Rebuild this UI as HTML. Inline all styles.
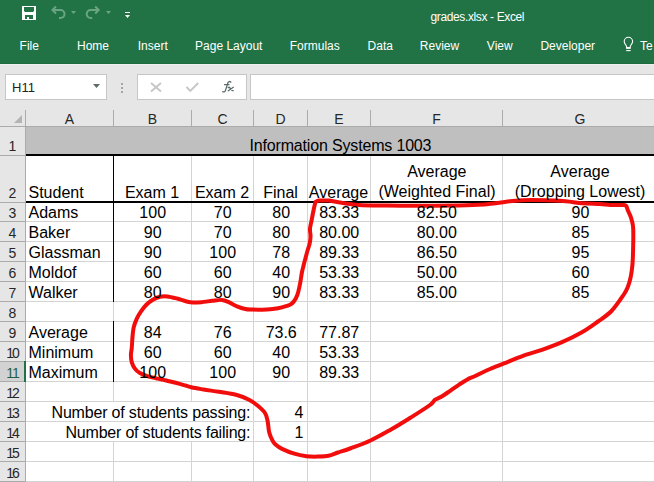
<!DOCTYPE html>
<html><head><meta charset="utf-8"><style>
html,body{margin:0;padding:0;width:654px;height:482px;overflow:hidden;background:#fff}
svg{display:block}
text{font-family:"Liberation Sans",sans-serif}
</style></head><body>
<svg width="654" height="482" viewBox="0 0 654 482">
<g shape-rendering="crispEdges">
</g>
<defs><filter id="soft" x="-5%" y="-5%" width="110%" height="110%"><feGaussianBlur stdDeviation="0.45"/></filter></defs>
<rect x="0" y="0" width="654" height="64" fill="#217346" />
<rect x="0" y="63" width="654" height="1" fill="#1d6a3f" />
<rect x="0" y="64" width="654" height="46" fill="#e6e6e6" />
<rect x="0" y="64" width="654" height="1" fill="#f0eef0" />
<rect x="5" y="74" width="102" height="26" fill="#c6c6c6" />
<rect x="6" y="75" width="100" height="24" fill="#fff" />
<rect x="137" y="74" width="110" height="26" fill="#c6c6c6" />
<rect x="138" y="75" width="108" height="24" fill="#fff" />
<rect x="250" y="74" width="451" height="26" fill="#c6c6c6" />
<rect x="251" y="75" width="449" height="24" fill="#fff" />
<rect x="121" y="83" width="2" height="2" fill="#a6a6a6" />
<rect x="121" y="87" width="2" height="2" fill="#a6a6a6" />
<rect x="121" y="91" width="2" height="2" fill="#a6a6a6" />
<rect x="0" y="110" width="654" height="16" fill="#e6e6e6" />
<rect x="0" y="126" width="654" height="1" fill="#ababab" />
<rect x="0" y="127" width="25" height="355" fill="#e6e6e6" />
<rect x="25" y="110" width="1" height="372" fill="#ababab" />
<rect x="113" y="110" width="1" height="16" fill="#ababab" />
<rect x="191" y="110" width="1" height="16" fill="#ababab" />
<rect x="253" y="110" width="1" height="16" fill="#ababab" />
<rect x="307" y="110" width="1" height="16" fill="#ababab" />
<rect x="370" y="110" width="1" height="16" fill="#ababab" />
<rect x="502" y="110" width="1" height="16" fill="#ababab" />
<path d="M14 123 L22 123 L22 115 Z" fill="#b4b4b4"/>
<rect x="26" y="127" width="628" height="355" fill="#fff" />
<rect x="26" y="155" width="628" height="1" fill="#d4d4d4" />
<rect x="0" y="155" width="25" height="1" fill="#ababab" />
<rect x="26" y="202" width="628" height="1" fill="#d4d4d4" />
<rect x="0" y="202" width="25" height="1" fill="#ababab" />
<rect x="26" y="221" width="628" height="1" fill="#d4d4d4" />
<rect x="0" y="221" width="25" height="1" fill="#ababab" />
<rect x="26" y="241" width="628" height="1" fill="#d4d4d4" />
<rect x="0" y="241" width="25" height="1" fill="#ababab" />
<rect x="26" y="261" width="628" height="1" fill="#d4d4d4" />
<rect x="0" y="261" width="25" height="1" fill="#ababab" />
<rect x="26" y="281" width="628" height="1" fill="#d4d4d4" />
<rect x="0" y="281" width="25" height="1" fill="#ababab" />
<rect x="26" y="301" width="628" height="1" fill="#d4d4d4" />
<rect x="0" y="301" width="25" height="1" fill="#ababab" />
<rect x="26" y="321" width="628" height="1" fill="#d4d4d4" />
<rect x="0" y="321" width="25" height="1" fill="#ababab" />
<rect x="26" y="341" width="628" height="1" fill="#d4d4d4" />
<rect x="0" y="341" width="25" height="1" fill="#ababab" />
<rect x="26" y="361" width="628" height="1" fill="#d4d4d4" />
<rect x="0" y="361" width="25" height="1" fill="#ababab" />
<rect x="26" y="381" width="628" height="1" fill="#d4d4d4" />
<rect x="0" y="381" width="25" height="1" fill="#ababab" />
<rect x="26" y="401" width="628" height="1" fill="#d4d4d4" />
<rect x="0" y="401" width="25" height="1" fill="#ababab" />
<rect x="26" y="421" width="628" height="1" fill="#d4d4d4" />
<rect x="0" y="421" width="25" height="1" fill="#ababab" />
<rect x="26" y="441" width="628" height="1" fill="#d4d4d4" />
<rect x="0" y="441" width="25" height="1" fill="#ababab" />
<rect x="26" y="461" width="628" height="1" fill="#d4d4d4" />
<rect x="0" y="461" width="25" height="1" fill="#ababab" />
<rect x="26" y="481" width="628" height="1" fill="#d4d4d4" />
<rect x="0" y="481" width="25" height="1" fill="#ababab" />
<rect x="113" y="156" width="1" height="245" fill="#d4d4d4" />
<rect x="113" y="441" width="1" height="41" fill="#d4d4d4" />
<rect x="191" y="156" width="1" height="245" fill="#d4d4d4" />
<rect x="191" y="441" width="1" height="41" fill="#d4d4d4" />
<rect x="253" y="156" width="1" height="326" fill="#d4d4d4" />
<rect x="307" y="156" width="1" height="326" fill="#d4d4d4" />
<rect x="370" y="156" width="1" height="326" fill="#d4d4d4" />
<rect x="502" y="156" width="1" height="326" fill="#d4d4d4" />
<rect x="26" y="127" width="628" height="27" fill="#bfbfbf" />
<rect x="26" y="154" width="628" height="2" fill="#000" />
<rect x="26" y="201" width="628" height="2" fill="#000" />
<rect x="113" y="156" width="1" height="146" fill="#000" />
<rect x="113" y="321" width="1" height="61" fill="#000" />
<rect x="0" y="362" width="24" height="19" fill="#d2d2d2" />
<rect x="24" y="361" width="2" height="21" fill="#217346" />
<g fill="#fff">
<path d="M22 6h14v14H22z M24 7h10v4l-1 1h-8l-1-1z M25 15h8v4h-4v-2h-2v2h-2z" fill-rule="evenodd"/>
</g>
<g fill="none" stroke="#6aa583" stroke-width="2"><path d="M52.5 10 h8 a4 4 0 0 1 0 8 h-1.5"/><path d="M56 6.5 l-3.5 3.5 l3.5 3.5"/><path d="M98.7 10 h-8 a4 4 0 0 0 0 8 h1.5"/><path d="M95.2 6.5 l3.5 3.5 l-3.5 3.5"/></g>
<path d="M71 11h5l-2.5 3z M106 11h5l-2.5 3z" fill="#6aa583"/>
<path d="M125 12h5v1h-5z M125 15h5l-2.5 3z" fill="#fff"/>
<g fill="none" stroke="#fff" stroke-width="1.1"><path d="M626.6 48.3 V46.8 C626.6 45.2 624.2 44 624.2 41.5 A4.2 4.2 0 0 1 632.6 41.5 C632.6 44 630.2 45.2 630.2 46.8 V48.3 Z"/><path d="M626.2 50.6 H630.6"/></g>
<rect x="626.6" y="47" width="3.6" height="1.6" fill="#fff"/>
<g stroke="#c6c6c6" stroke-width="1.9" fill="none"><path d="M151 83 L161 91.5 M161 83 L151 91.5"/><path d="M186.5 87 L190.3 91 L198.2 83"/></g>
<g fill="none" stroke="#5b6a6a" stroke-width="1.3" stroke-linecap="round"><path d="M230.8 82.2 C230 81.2 228.6 81.3 228 82.6 L225.4 90.6 C225 91.8 223.8 92.2 222.7 91.6"/><path d="M224.5 84.6 H229"/><path d="M229.3 87.3 L232.2 90.6 M233.3 87.3 L228.3 90.8 M228.2 87.5 H229.6 M232.2 90.6 H233.2"/></g>
<path d="M93 84 h7 l-3.5 4z" fill="#5f6b6b"/>
<path d="M315.5 202 C316.1 201.8 316.8 200.8 319 200.6 C321.2 200.4 325.4 200.3 328.7 200.6 C331.9 200.9 333.5 201.6 338.5 202.3 C343.5 203.0 350.6 204.4 358.7 204.9 C366.8 205.4 376.8 205.4 387 205.6 C397.2 205.8 408.7 205.8 420 205.8 C431.3 205.8 444.4 205.7 455 205.5 C465.6 205.3 474.1 205.2 483.7 204.5 C493.3 203.8 504.4 201.8 512.4 201 C520.4 200.2 523.6 200.0 531.5 200 C539.4 200.0 551.5 200.3 560 200.8 C568.5 201.3 576.1 202.7 582.8 203.2 C589.5 203.7 595.4 203.7 600 204 C604.6 204.3 606.7 204.7 610.4 204.9 C614.1 205.1 619.4 204.8 622 205 C624.6 205.2 625.0 204.9 626 205.8 C627.0 206.7 627.1 208.6 628 210.6 C628.9 212.6 630.3 215.2 631.1 217.8 C631.9 220.4 632.6 223.0 633 226.1 C633.4 229.2 633.3 232.7 633.3 236.5 C633.3 240.3 633.2 244.4 633.1 249 C633.0 253.6 632.9 259.3 632.5 264 C632.1 268.7 631.5 273.2 630.7 277 C629.9 280.8 629.0 284.0 627.8 287 C626.6 290.0 626.2 291.0 623.5 295 C620.8 299.0 615.8 306.6 611.5 311 C607.2 315.4 603.1 317.9 598 321.5 C592.9 325.1 587.0 329.4 581 332.8 C575.0 336.2 568.4 339.4 562 342.2 C555.6 345.0 549.1 347.3 542.6 349.6 C536.1 351.9 529.4 353.5 523 355.8 C516.6 358.1 509.5 361.2 504 363.4 C498.5 365.6 493.7 367.4 490 369 C486.3 370.6 484.4 371.5 481.9 372.7 C479.3 373.9 477.1 375.2 474.7 376.3 C472.3 377.4 470.0 378.0 467.4 379.4 C464.8 380.8 461.9 382.8 459.1 384.6 C456.3 386.4 453.6 388.4 450.8 390.3 C448.0 392.2 445.1 394.4 442.5 396 C439.9 397.6 437.3 398.2 435.2 399.7 C433.1 401.2 434.2 401.9 430 405 C425.8 408.1 416.5 413.9 410 418 C403.5 422.1 397.6 425.8 391 429.5 C384.4 433.2 377.3 437.3 370.5 440.5 C363.7 443.7 355.4 446.5 350 448.5 C344.6 450.5 341.6 451.3 338 452.5 C334.4 453.7 331.9 455.1 328.5 455.8 C325.1 456.5 321.2 456.5 317.5 456.6 C313.8 456.7 310.4 456.7 306.5 456.2 C302.6 455.7 298.4 454.9 294.3 453.7 C290.2 452.5 285.1 450.4 282 448.9 C278.9 447.4 277.1 445.9 275.5 444.5 C273.9 443.1 273.6 442.5 272.5 440.5 C271.4 438.5 270.0 435.6 269.2 432.3 C268.4 429.1 268.3 424.2 267.6 421 C266.9 417.8 266.7 415.6 265 413 C263.3 410.4 260.2 407.7 257.5 405.5 C254.8 403.3 252.6 401.6 249 399.8 C245.4 398.0 241.0 396.1 236 394.8 C231.0 393.5 224.2 392.7 218.8 391.8 C213.4 390.9 208.1 390.3 203.5 389.5 C198.9 388.7 195.1 388.1 191.3 387.2 C187.5 386.3 184.9 385.2 180.6 384.1 C176.3 383.0 169.2 381.2 165.3 380.3 C161.4 379.4 160.3 379.3 157.3 378.6 C154.3 377.9 150.3 377.0 147.4 376.1 C144.5 375.2 142.0 374.2 139.9 373 C137.8 371.8 136.2 370.4 134.9 368.6 C133.6 366.8 132.5 364.7 131.8 362.4 C131.1 360.1 130.9 357.4 130.9 354.9 C130.9 352.4 131.6 350.3 131.8 347.5 C132.1 344.7 132.1 341.4 132.4 338 C132.7 334.6 133.0 330.6 133.7 327.4 C134.4 324.2 135.6 321.3 136.8 318.6 C138.1 315.9 139.6 313.5 141.2 311.2 C142.8 308.9 144.2 306.9 146.1 305 C148.0 303.1 150.1 301.4 152.4 300 C154.7 298.6 157.3 297.4 159.8 296.8 C162.3 296.2 164.3 296.1 167.3 296.4 C170.3 296.7 174.5 297.9 177.9 298.8 C181.3 299.7 185.0 301.2 187.5 301.8 C190.0 302.4 190.7 302.5 193 302.6 C195.3 302.7 198.1 302.5 201.3 302.2 C204.5 301.9 208.9 301.2 212.3 300.8 C215.7 300.4 219.2 299.7 221.9 299.9 C224.7 300.1 226.3 301.1 228.8 302.2 C231.3 303.3 234.2 305.2 237 306.3 C239.8 307.4 242.8 308.4 245.3 309 C247.8 309.6 248.5 309.5 252.1 309.6 C255.7 309.7 262.5 309.7 266.8 309.5 C271.1 309.3 274.1 309.0 278 308.2 C281.9 307.4 287.2 306.1 290 304.8 C292.8 303.5 293.2 302.2 294.5 300.5 C295.8 298.8 296.7 296.7 297.5 294.5 C298.3 292.3 298.8 289.9 299.3 287.4 C299.9 284.9 300.4 282.1 300.8 279.5 C301.2 276.9 301.5 274.4 302 272 C302.5 269.6 303.1 267.5 303.7 265 C304.3 262.5 305.1 259.7 305.8 257 C306.5 254.3 307.3 251.3 308 249 C308.7 246.7 309.4 245.2 309.8 243 C310.2 240.8 310.5 238.4 310.5 236 C310.5 233.6 309.8 231.5 310 228.7 C310.2 225.9 311.2 222.7 311.8 219.3 C312.4 215.9 313.3 211.4 313.9 208.5 C314.5 205.6 315.2 203.1 315.5 202" fill="none" stroke="#f20c0c" stroke-width="4.0" stroke-linecap="round" stroke-linejoin="round" filter="url(#soft)"/>
<text x="477.5" y="21" font-size="12" text-anchor="middle" fill="#fff" textLength="94">grades.xlsx - Excel</text>
<text x="29.25" y="49.5" font-size="12" text-anchor="middle" fill="#fff" >File</text>
<text x="93.0" y="49.5" font-size="12" text-anchor="middle" fill="#fff" >Home</text>
<text x="152.75" y="49.5" font-size="12" text-anchor="middle" fill="#fff" >Insert</text>
<text x="228.75" y="49.5" font-size="12" text-anchor="middle" fill="#fff" >Page Layout</text>
<text x="314.75" y="49.5" font-size="12" text-anchor="middle" fill="#fff" >Formulas</text>
<text x="380.25" y="49.5" font-size="12" text-anchor="middle" fill="#fff" >Data</text>
<text x="439.5" y="49.5" font-size="12" text-anchor="middle" fill="#fff" >Review</text>
<text x="499.75" y="49.5" font-size="12" text-anchor="middle" fill="#fff" >View</text>
<text x="567.75" y="49.5" font-size="12" text-anchor="middle" fill="#fff" >Developer</text>
<text x="640" y="49.5" font-size="12" text-anchor="start" fill="#fff" >Te</text>
<text x="12" y="92" font-size="13" text-anchor="start" fill="#222" >H11</text>
<text x="69.5" y="123.5" font-size="14" text-anchor="middle" fill="#262626" >A</text>
<text x="152.5" y="123.5" font-size="14" text-anchor="middle" fill="#262626" >B</text>
<text x="222.5" y="123.5" font-size="14" text-anchor="middle" fill="#262626" >C</text>
<text x="280.5" y="123.5" font-size="14" text-anchor="middle" fill="#262626" >D</text>
<text x="339.0" y="123.5" font-size="14" text-anchor="middle" fill="#262626" >E</text>
<text x="436.5" y="123.5" font-size="14" text-anchor="middle" fill="#262626" >F</text>
<text x="580.0" y="123.5" font-size="14" text-anchor="middle" fill="#262626" >G</text>
<text x="12.5" y="151" font-size="14" text-anchor="middle" fill="#262626" >1</text>
<text x="12.5" y="198" font-size="14" text-anchor="middle" fill="#262626" >2</text>
<text x="12.5" y="218" font-size="14" text-anchor="middle" fill="#262626" >3</text>
<text x="12.5" y="238" font-size="14" text-anchor="middle" fill="#262626" >4</text>
<text x="12.5" y="258" font-size="14" text-anchor="middle" fill="#262626" >5</text>
<text x="12.5" y="278" font-size="14" text-anchor="middle" fill="#262626" >6</text>
<text x="12.5" y="298" font-size="14" text-anchor="middle" fill="#262626" >7</text>
<text x="12.5" y="318" font-size="14" text-anchor="middle" fill="#262626" >8</text>
<text x="12.5" y="338" font-size="14" text-anchor="middle" fill="#262626" >9</text>
<text x="13" y="358" font-size="14" text-anchor="middle" fill="#262626" textLength="13.5">10</text>
<text x="13" y="378" font-size="14" text-anchor="middle" fill="#1f5f44" textLength="13.5">11</text>
<text x="13" y="398" font-size="14" text-anchor="middle" fill="#262626" textLength="13.5">12</text>
<text x="13" y="418" font-size="14" text-anchor="middle" fill="#262626" textLength="13.5">13</text>
<text x="13" y="438" font-size="14" text-anchor="middle" fill="#262626" textLength="13.5">14</text>
<text x="13" y="458" font-size="14" text-anchor="middle" fill="#262626" textLength="13.5">15</text>
<text x="13" y="478" font-size="14" text-anchor="middle" fill="#262626" textLength="13.5">16</text>
<text x="340.5" y="151" font-size="16" text-anchor="middle" fill="#000" textLength="182">Information Systems 1003</text>
<text x="28.5" y="198" font-size="16" text-anchor="start" fill="#000" >Student</text>
<text x="152" y="198" font-size="16" text-anchor="middle" fill="#000" >Exam 1</text>
<text x="222" y="198" font-size="16" text-anchor="middle" fill="#000" >Exam 2</text>
<text x="280.5" y="198" font-size="16" text-anchor="middle" fill="#000" >Final</text>
<text x="338.5" y="198" font-size="16" text-anchor="middle" fill="#000" >Average</text>
<text x="436.8" y="177" font-size="16" text-anchor="middle" fill="#000" >Average</text>
<text x="437" y="197" font-size="16" text-anchor="middle" fill="#000" >(Weighted Final)</text>
<text x="580" y="177" font-size="16" text-anchor="middle" fill="#000" >Average</text>
<text x="580" y="197" font-size="16" text-anchor="middle" fill="#000" >(Dropping Lowest)</text>
<text x="28.5" y="218" font-size="16" text-anchor="start" fill="#000" >Adams</text>
<text x="152.7" y="218" font-size="16" text-anchor="middle" fill="#000" >100</text>
<text x="222.7" y="218" font-size="16" text-anchor="middle" fill="#000" >70</text>
<text x="281.2" y="218" font-size="16" text-anchor="middle" fill="#000" >80</text>
<text x="339.2" y="218" font-size="16" text-anchor="middle" fill="#000" >83.33</text>
<text x="436.8" y="218" font-size="16" text-anchor="middle" fill="#000" >82.50</text>
<text x="580.5" y="218" font-size="16" text-anchor="middle" fill="#000" >90</text>
<text x="28.5" y="238" font-size="16" text-anchor="start" fill="#000" >Baker</text>
<text x="152.7" y="238" font-size="16" text-anchor="middle" fill="#000" >90</text>
<text x="222.7" y="238" font-size="16" text-anchor="middle" fill="#000" >70</text>
<text x="281.2" y="238" font-size="16" text-anchor="middle" fill="#000" >80</text>
<text x="339.2" y="238" font-size="16" text-anchor="middle" fill="#000" >80.00</text>
<text x="436.8" y="238" font-size="16" text-anchor="middle" fill="#000" >80.00</text>
<text x="580.5" y="238" font-size="16" text-anchor="middle" fill="#000" >85</text>
<text x="28.5" y="258" font-size="16" text-anchor="start" fill="#000" >Glassman</text>
<text x="152.7" y="258" font-size="16" text-anchor="middle" fill="#000" >90</text>
<text x="222.7" y="258" font-size="16" text-anchor="middle" fill="#000" >100</text>
<text x="281.2" y="258" font-size="16" text-anchor="middle" fill="#000" >78</text>
<text x="339.2" y="258" font-size="16" text-anchor="middle" fill="#000" >89.33</text>
<text x="436.8" y="258" font-size="16" text-anchor="middle" fill="#000" >86.50</text>
<text x="580.5" y="258" font-size="16" text-anchor="middle" fill="#000" >95</text>
<text x="28.5" y="278" font-size="16" text-anchor="start" fill="#000" >Moldof</text>
<text x="152.7" y="278" font-size="16" text-anchor="middle" fill="#000" >60</text>
<text x="222.7" y="278" font-size="16" text-anchor="middle" fill="#000" >60</text>
<text x="281.2" y="278" font-size="16" text-anchor="middle" fill="#000" >40</text>
<text x="339.2" y="278" font-size="16" text-anchor="middle" fill="#000" >53.33</text>
<text x="436.8" y="278" font-size="16" text-anchor="middle" fill="#000" >50.00</text>
<text x="580.5" y="278" font-size="16" text-anchor="middle" fill="#000" >60</text>
<text x="28.5" y="298" font-size="16" text-anchor="start" fill="#000" >Walker</text>
<text x="152.7" y="298" font-size="16" text-anchor="middle" fill="#000" >80</text>
<text x="222.7" y="298" font-size="16" text-anchor="middle" fill="#000" >80</text>
<text x="281.2" y="298" font-size="16" text-anchor="middle" fill="#000" >90</text>
<text x="339.2" y="298" font-size="16" text-anchor="middle" fill="#000" >83.33</text>
<text x="436.8" y="298" font-size="16" text-anchor="middle" fill="#000" >85.00</text>
<text x="580.5" y="298" font-size="16" text-anchor="middle" fill="#000" >85</text>
<text x="28.5" y="338" font-size="16" text-anchor="start" fill="#000" >Average</text>
<text x="152.7" y="338" font-size="16" text-anchor="middle" fill="#000" >84</text>
<text x="222.7" y="338" font-size="16" text-anchor="middle" fill="#000" >76</text>
<text x="281.2" y="338" font-size="16" text-anchor="middle" fill="#000" >73.6</text>
<text x="339.2" y="338" font-size="16" text-anchor="middle" fill="#000" >77.87</text>
<text x="28.5" y="358" font-size="16" text-anchor="start" fill="#000" >Minimum</text>
<text x="152.7" y="358" font-size="16" text-anchor="middle" fill="#000" >60</text>
<text x="222.7" y="358" font-size="16" text-anchor="middle" fill="#000" >60</text>
<text x="281.2" y="358" font-size="16" text-anchor="middle" fill="#000" >40</text>
<text x="339.2" y="358" font-size="16" text-anchor="middle" fill="#000" >53.33</text>
<text x="28.5" y="378" font-size="16" text-anchor="start" fill="#000" >Maximum</text>
<text x="152.7" y="378" font-size="16" text-anchor="middle" fill="#000" >100</text>
<text x="222.7" y="378" font-size="16" text-anchor="middle" fill="#000" >100</text>
<text x="281.2" y="378" font-size="16" text-anchor="middle" fill="#000" >90</text>
<text x="339.2" y="378" font-size="16" text-anchor="middle" fill="#000" >89.33</text>
<text x="250.5" y="418" font-size="16" text-anchor="end" fill="#000" textLength="199">Number of students passing:</text>
<text x="250.5" y="438" font-size="16" text-anchor="end" fill="#000" textLength="185">Number of students failing:</text>
<text x="303.5" y="418" font-size="16" text-anchor="end" fill="#000" >4</text>
<text x="303.5" y="438" font-size="16" text-anchor="end" fill="#000" >1</text>
</svg>
</body></html>
